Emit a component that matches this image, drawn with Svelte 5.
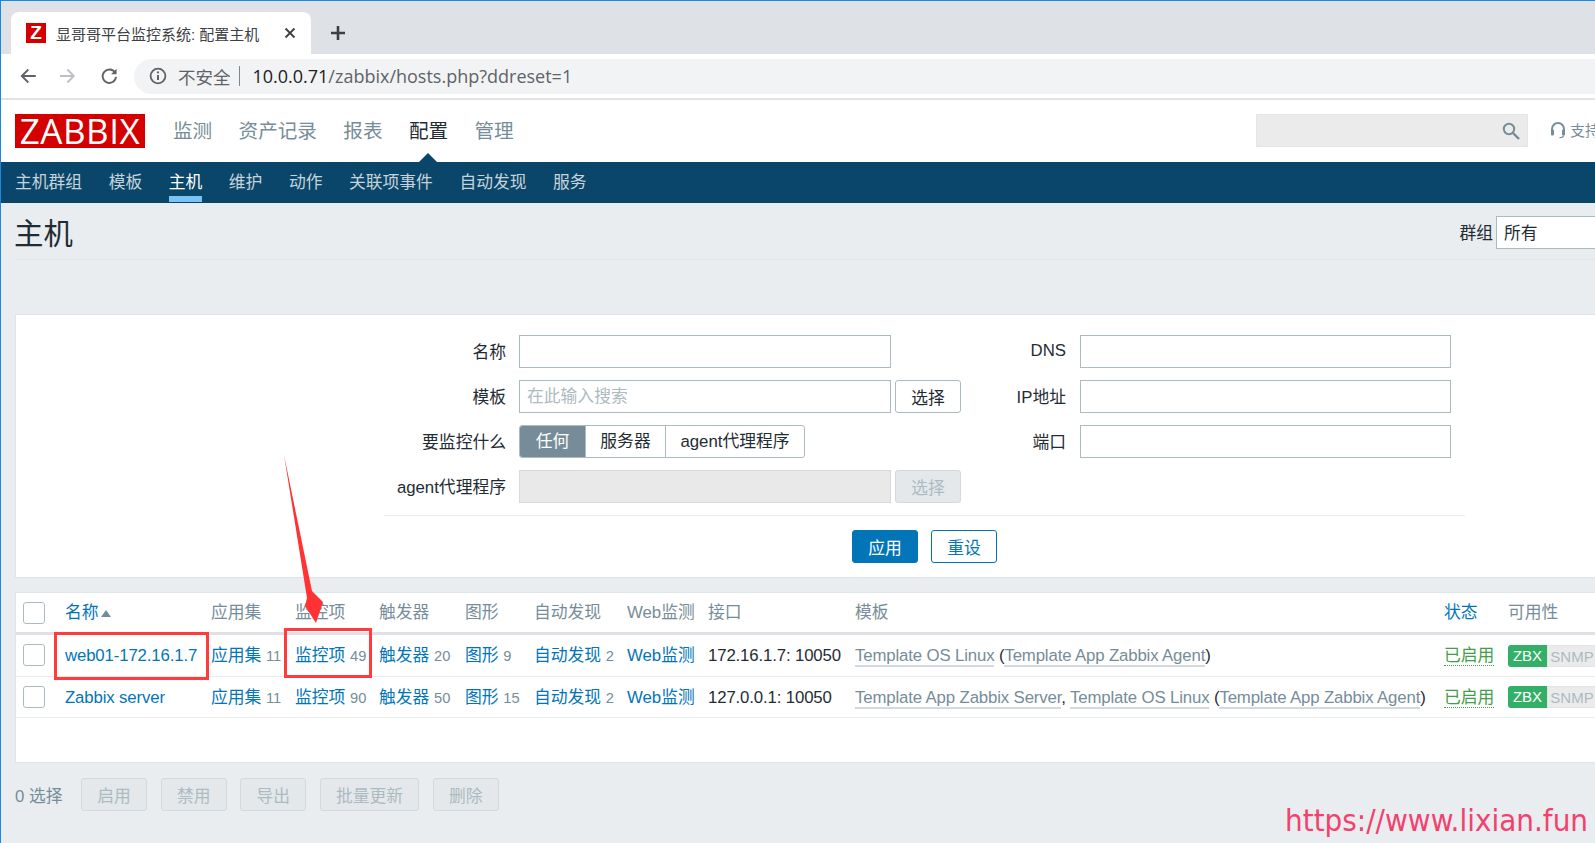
<script lang="ts">
  const mainNav = [
    { label: "监测" },
    { label: "资产记录" },
    { label: "报表" },
    { label: "配置", active: true },
    { label: "管理" },
  ];
  const subNav = [
    { label: "主机群组" },
    { label: "模板" },
    { label: "主机", active: true },
    { label: "维护" },
    { label: "动作" },
    { label: "关联项事件" },
    { label: "自动发现" },
    { label: "服务" },
  ];
  const columns = ["应用集", "监控项", "触发器", "图形", "自动发现", "Web监测", "接口", "模板"];
  const hosts = [
    {
      name: "web01-172.16.1.7",
      apps: 11, items: 49, triggers: 20, graphs: 9, discovery: 2,
      iface: "172.16.1.7: 10050",
      templates: ["Template OS Linux"],
      parent: "Template App Zabbix Agent",
    },
    {
      name: "Zabbix server",
      apps: 11, items: 90, triggers: 50, graphs: 15, discovery: 2,
      iface: "127.0.0.1: 10050",
      templates: ["Template App Zabbix Server", "Template OS Linux"],
      parent: "Template App Zabbix Agent",
    },
  ];
  const bulk = ["启用", "禁用", "导出", "批量更新", "删除"];
</script>

<div class="page">
  <div class="tabbar">
    <div class="tab">
      <span class="favicon">Z</span>
      <span class="tab-title">显哥哥平台监控系统: 配置主机</span>
      <svg class="tab-close" viewBox="0 0 12 12" width="12" height="12">
        <path d="M1.5 1.5l9 9M10.5 1.5l-9 9" stroke="#3c4043" stroke-width="1.8" fill="none" />
      </svg>
    </div>
    <svg class="tab-new" viewBox="0 0 16 16" width="16" height="16">
      <path d="M8 1v14M1 8h14" stroke="#3c4043" stroke-width="2.6" fill="none" />
    </svg>
  </div>

  <div class="toolbar">
    <svg viewBox="0 0 20 20" width="20" height="20" class="tool">
      <path d="M18 10H3.5M10 3l-7 7 7 7" stroke="#5f6368" stroke-width="2" fill="none" />
    </svg>
    <svg viewBox="0 0 20 20" width="20" height="20" class="tool">
      <path d="M2 10h14.5M10 3l7 7-7 7" stroke="#bdc1c6" stroke-width="2" fill="none" />
    </svg>
    <svg viewBox="0 0 20 20" width="20" height="20" class="tool reload">
      <path d="M16.2 6.5A7.2 7.2 0 1 0 17.2 11" stroke="#5f6368" stroke-width="2" fill="none" />
      <path d="M17.8 2.2v6h-6z" fill="#5f6368" />
    </svg>
    <div class="address">
      <svg viewBox="0 0 18 18" width="18" height="18">
        <circle cx="9" cy="9" r="7.4" stroke="#5f6368" stroke-width="1.8" fill="none" />
        <path d="M9 8v5" stroke="#5f6368" stroke-width="2" />
        <circle cx="9" cy="5.4" r="1.1" fill="#5f6368" />
      </svg>
      <span class="insecure">不安全</span>
      <span class="sep"></span>
      <span class="url"><b>10.0.0.71</b>/zabbix/hosts.php?ddreset=1</span>
    </div>
  </div>

  <header class="mainbar">
    <div class="logo">ZABBIX</div>
    <nav class="mainnav">
      {#each mainNav as item}
        <span class:active={item.active}>{item.label}</span>
      {/each}
    </nav>
    <div class="search">
      <svg viewBox="0 0 18 18" width="18" height="18">
        <circle cx="7" cy="7" r="5.2" stroke="#768d99" stroke-width="2" fill="none" />
        <path d="M11 11l6 6" stroke="#768d99" stroke-width="2.4" />
      </svg>
    </div>
    <div class="support">
      <svg viewBox="0 0 16 18" width="16" height="18">
        <path d="M2 11V8a6 6 0 0 1 12 0v3" stroke="#768d99" stroke-width="2" fill="none" />
        <rect x="1" y="8.5" width="3" height="6" rx="1" fill="#768d99" />
        <rect x="12" y="8.5" width="3" height="6" rx="1" fill="#768d99" />
        <path d="M13.5 14.5q0 2-4 2.2" stroke="#768d99" stroke-width="1.2" fill="none" />
      </svg>
      <span>支持</span>
    </div>
  </header>

  <nav class="subnav">
    {#each subNav as item}
      <span class:active={item.active}>{item.label}</span>
    {/each}
  </nav>

  <main class="content">
    <div class="title-row">
      <h1>主机</h1>
      <div class="group">
        <span>群组</span>
        <div class="select">所有</div>
      </div>
    </div>

    <section class="filter">
      <div class="filter-grid">
        <label for="f-name">名称</label>
        <div><input id="f-name" class="wide" /></div>
        <label for="f-dns">DNS</label>
        <input id="f-dns" />

        <label for="f-tpl">模板</label>
        <div class="with-btn">
          <input id="f-tpl" class="wide" placeholder="在此输入搜索" />
          <button class="plain">选择</button>
        </div>
        <label for="f-ip">IP地址</label>
        <input id="f-ip" />

        <span class="label">要监控什么</span>
        <div class="segment">
          <span class="on">任何</span>
          <span>服务器</span>
          <span>agent代理程序</span>
        </div>
        <label for="f-port">端口</label>
        <input id="f-port" />

        <span class="label">agent代理程序</span>
        <div class="with-btn">
          <input class="wide" disabled />
          <button class="off">选择</button>
        </div>
      </div>
      <div class="filter-actions">
        <button class="apply">应用</button>
        <button class="reset">重设</button>
      </div>
    </section>

    <section class="hosts">
      <table>
        <colgroup>
          <col style="width:49px" />
          <col style="width:146px" />
          <col style="width:84px" />
          <col style="width:84px" />
          <col style="width:86px" />
          <col style="width:69px" />
          <col style="width:93px" />
          <col style="width:81px" />
          <col style="width:147px" />
          <col style="width:589px" />
          <col style="width:64px" />
          <col />
        </colgroup>
        <thead>
          <tr>
            <th class="check"><span class="box"></span></th>
            <th><a href="#top">名称</a><span class="sort"></span></th>
            {#each columns as col}
              <th>{col}</th>
            {/each}
            <th><a href="#top">状态</a></th>
            <th>可用性</th>
          </tr>
        </thead>
        <tbody>
          {#each hosts as h}
            <tr>
              <td class="check"><span class="box"></span></td>
              <td class="latin"><a href="#top">{h.name}</a></td>
              <td><a href="#top">应用集</a> <small>{h.apps}</small></td>
              <td><a href="#top">监控项</a> <small>{h.items}</small></td>
              <td><a href="#top">触发器</a> <small>{h.triggers}</small></td>
              <td><a href="#top">图形</a> <small>{h.graphs}</small></td>
              <td><a href="#top">自动发现</a> <small>{h.discovery}</small></td>
              <td><a href="#top">Web监测</a></td>
              <td class="latin">{h.iface}</td>
              <td class="latin tpl">
                {#each h.templates as t, i}<span class="tlink">{t}</span>{i < h.templates.length - 1 ? ", " : " "}{/each}(<span class="tlink">{h.parent}</span>)
              </td>
              <td><span class="enabled">已启用</span></td>
              <td class="avail"><span class="zbx">ZBX</span><span class="snmp">SNMP</span></td>
            </tr>
          {/each}
        </tbody>
      </table>
    </section>

    <div class="footer">
      <span class="count">0 选择</span>
      {#each bulk as b}
        <button class="off">{b}</button>
      {/each}
    </div>
  </main>

  <!-- annotations drawn on top of the screenshot -->
  <div class="mark mark-name"></div>
  <div class="mark mark-items"></div>
  <svg class="arrow" viewBox="0 0 50 180" width="50" height="180">
    <path d="M4 0L32 136 43 147 36 168 25 151 27 143z" fill="#ff3333" />
  </svg>
  <div class="watermark">https://www.lixian.fun</div>
</div>

<style>
  :global(body) {
    background: #e9edf0;
    overflow: hidden;
  }
  .page {
    position: relative;
    box-sizing: border-box;
    width: 1640px;
    height: 843px;
    border-top: 1px solid #1a88e0;
    border-left: 1px solid #1a88e0;
    font-family: "Liberation Sans", "Noto Sans CJK SC", sans-serif;
    font-size: 16.8px;
    color: #1f2c33;
    overflow: hidden;
  }

  /* browser chrome */
  .tabbar {
    display: flex;
    align-items: flex-end;
    height: 53px;
    background: #dee1e6;
    padding-left: 10px;
  }
  .tab {
    display: flex;
    align-items: center;
    box-sizing: border-box;
    width: 300px;
    height: 42px;
    padding: 0 15px;
    background: #fff;
    border-radius: 8px 8px 0 0;
  }
  .favicon {
    width: 20px;
    height: 20px;
    background: #d40000;
    color: #fff;
    font-size: 19px;
    font-weight: 700;
    line-height: 20px;
    text-align: center;
  }
  .tab-title {
    margin-left: 10px;
    font-size: 15px;
    color: #3c4043;
    white-space: nowrap;
  }
  .tab-close {
    margin-left: auto;
    margin-right: 0;
  }
  .tab-new {
    margin: 0 0 13px 19px;
  }
  .toolbar {
    display: flex;
    align-items: center;
    background: #fff;
    border-bottom: 2px solid #e2e3e5;
    box-sizing: border-box;
    height: 46px;
    padding-left: 18px;
  }
  .tool {
    margin-right: 20px;
  }
  .reload {
    margin-left: 4px;
  }
  .address {
    display: flex;
    align-items: center;
    width: 1600px;
    height: 35px;
    margin-left: -5px;
    padding-left: 15px;
    background: #f1f3f4;
    border-radius: 18px 0 0 18px;
  }
  .insecure {
    margin-left: 11px;
    font-size: 17.5px;
    color: #5f6368;
  }
  .sep {
    width: 1px;
    height: 20px;
    margin: 0 12px 0 9px;
    background: #80868b;
  }
  .url {
    font-family: "Open Sans", "Liberation Sans", sans-serif;
    font-size: 18px;
    color: #5f6368;
    white-space: nowrap;
  }
  .url b {
    font-weight: 400;
    color: #202124;
  }

  /* zabbix header */
  .mainbar {
    display: flex;
    align-items: center;
    height: 62px;
    padding-left: 14px;
    background: #fff;
  }
  .logo {
    box-sizing: border-box;
    width: 130px;
    height: 34px;
    background: #d40000;
    color: #fff;
    font-family: "Open Sans", "Liberation Sans", sans-serif;
    font-size: 35px;
    line-height: 33px;
    text-align: center;
    letter-spacing: 0.5px;
  }
  .mainnav {
    display: flex;
    gap: 26.4px;
    margin: -4px 0 0 28px;
    font-size: 19.6px;
    color: #768d99;
  }
  .mainnav .active {
    position: relative;
    color: #1f2c33;
  }
  .mainnav .active::after {
    content: "";
    position: absolute;
    left: 7px;
    bottom: -21px;
    border: 12px solid transparent;
    border-top: 0;
    border-bottom-color: #0a466a;
  }
  .search {
    display: flex;
    align-items: center;
    justify-content: flex-end;
    box-sizing: border-box;
    width: 272px;
    height: 33px;
    margin: -1px 1px 0 auto;
    padding-right: 7px;
    background: #ebebeb;
    border: 1px solid #e3e5e6;
  }
  .support {
    display: flex;
    align-items: center;
    gap: 4px;
    width: 90px;
    margin: -3px 0 0 21px;
    font-size: 15px;
    color: #768d99;
  }
  .subnav {
    display: flex;
    gap: 26.5px;
    height: 41px;
    padding-left: 14px;
    background: #0a466a;
    font-size: 16.8px;
    line-height: 42px;
    color: #c5d3da;
  }
  .subnav .active {
    color: #fff;
    height: 34px;
    border-bottom: 6px solid #7cc3f5;
  }

  /* content */
  .content {
    padding: 0 14px;
  }
  .title-row {
    display: flex;
    align-items: center;
    justify-content: space-between;
    height: 56px;
    border-bottom: 1px solid #dfe4e7;
  }
  h1 {
    margin: 0 0 0 -1px;
    font-size: 29.4px;
    font-weight: 400;
  }
  .group {
    display: flex;
    align-items: center;
    gap: 3px;
    margin-top: 2px;
  }
  .select {
    box-sizing: border-box;
    width: 130px;
    height: 33px;
    padding-left: 7px;
    line-height: 34px;
    background: #fff;
    border: 1px solid #acbbc2;
  }

  .filter {
    box-sizing: border-box;
    height: 264px;
    margin-top: 54px;
    padding-top: 20px;
    background: #fff;
    border: 1px solid #dfe4e7;
  }
  .filter-grid {
    display: grid;
    grid-template-columns: 490px 454px 106px 372px;
    grid-auto-rows: 33px;
    row-gap: 12px;
    align-items: center;
  }
  .filter-grid > label,
  .filter-grid > .label {
    padding-bottom: 2px;
    text-align: right;
  }
  .filter-grid > :nth-child(4n + 2) {
    margin-left: 13px;
  }
  input {
    box-sizing: border-box;
    width: 371px;
    height: 33px;
    margin-left: 14px;
    padding: 0 7px;
    border: 1px solid #acbbc2;
    background: #fff;
    font: inherit;
    outline: none;
  }
  input.wide {
    display: block;
    flex: none;
    width: 372px;
    margin-left: 0;
  }
  input:disabled {
    background: #e9e9e9;
    border-color: #d5dadd;
  }
  input::placeholder {
    color: #acbbc2;
  }
  .with-btn {
    display: flex;
    gap: 4px;
  }
  button {
    flex: none;
    box-sizing: border-box;
    height: 33px;
    padding: 0 15px;
    border-radius: 3px;
    font: inherit;
  }
  .plain {
    width: 66px;
    padding: 0;
    background: #fff;
    border: 1px solid #acbbc2;
    color: #1f2c33;
  }
  .off {
    background: #e5e8ea;
    border: 1px solid #d3d9dc;
    color: #acbbc2;
  }
  .with-btn .off {
    width: 66px;
    padding: 0;
  }
  .segment {
    display: flex;
    width: 286px;
    height: 33px;
    box-sizing: border-box;
    border: 1px solid #acbbc2;
    border-radius: 3px;
    line-height: 31px;
    text-align: center;
    overflow: hidden;
  }
  .segment span {
    flex: none;
    width: 80px;
    border-left: 1px solid #acbbc2;
    box-sizing: border-box;
  }
  .segment span:last-child {
    width: 139px;
  }
  .segment .on {
    width: 65px;
    border-left: 0;
    background: #768d99;
    color: #fff;
  }
  .filter-actions {
    display: flex;
    gap: 13px;
    margin: 12px 0 0 368px;
    padding: 14px 0 0 468px;
    width: 613px;
    border-top: 1px solid #e9edf0;
  }
  .apply,
  .reset {
    width: 66px;
    padding: 0;
  }
  .apply {
    background: #0275b8;
    border: 1px solid #0275b8;
    color: #fff;
  }
  .reset {
    background: #fff;
    border: 1px solid #0275b8;
    color: #0275b8;
  }

  .hosts {
    box-sizing: border-box;
    height: 171px;
    margin-top: 14px;
    background: #fff;
    border: 1px solid #dfe4e7;
  }
  table {
    table-layout: fixed;
    width: 1609px;
    border-collapse: collapse;
  }
  th,
  td {
    padding: 0;
    font-weight: 400;
    line-height: 22px;
    text-align: left;
    white-space: nowrap;
    overflow: hidden;
  }
  th {
    height: 39px;
    color: #768d99;
    border-bottom: 3px solid #dee2e6;
  }
  td {
    height: 40px;
    border-bottom: 1px solid #e9edf0;
  }
  tbody tr:first-child td {
    height: 41px;
  }
  tbody tr:last-child td:not(.check, .avail) {
    height: 38px;
    padding-top: 2px;
  }
  tbody .box {
    margin-top: -1px;
  }
  .latin {
    letter-spacing: -0.14px;
  }
  .check {
    padding-left: 7px;
  }
  .box {
    display: block;
    box-sizing: border-box;
    width: 22px;
    height: 22px;
    background: #fff;
    border: 1px solid #acbbc2;
    border-radius: 3px;
  }
  a {
    color: #0275b8;
    text-decoration: none;
  }
  small {
    font-size: 14.7px;
    color: #768d99;
  }
  .sort {
    display: inline-block;
    margin-left: 2px;
    border: 5px solid transparent;
    border-top: 0;
    border-bottom: 7px solid #768d99;
    vertical-align: 1px;
  }
  .tlink {
    color: #768d99;
    border-bottom: 2px solid #d3dadf;
  }
  .enabled {
    color: #429e47;
    border-bottom: 1px dotted #429e47;
  }
  .avail {
    overflow: visible;
  }
  .zbx,
  .snmp {
    display: inline-block;
    box-sizing: border-box;
    height: 22px;
    font-size: 15px;
    line-height: 22px;
    text-align: center;
    vertical-align: middle;
  }
  .zbx {
    width: 39px;
    background: #34af67;
    color: #fff;
    border-radius: 3px 0 0 3px;
  }
  .snmp {
    width: 50px;
    background: #ebebeb;
    color: #acbbc2;
    line-height: 21px;
    border: 1px solid #dfe4e7;
  }

  .footer {
    display: flex;
    align-items: center;
    height: 33px;
    margin-top: 15px;
    color: #768d99;
  }
  .count {
    width: 66px;
  }
  .footer .off {
    width: 66px;
    padding: 0;
    margin-right: 13.7px;
  }
  .footer .off:nth-child(5) {
    width: 99px;
  }

  /* annotations */
  .mark {
    position: absolute;
    box-sizing: border-box;
    border: 3px solid #ff3b3b;
  }
  .mark-name {
    left: 53px;
    top: 631px;
    width: 155px;
    height: 48px;
  }
  .mark-items {
    left: 283px;
    top: 627px;
    width: 88px;
    height: 50px;
  }
  .arrow {
    position: absolute;
    left: 279px;
    top: 454px;
  }
  .watermark {
    position: absolute;
    right: 52px;
    top: 801px;
    font-family: "DejaVu Sans", sans-serif;
    font-stretch: condensed;
    font-size: 31px;
    color: #f2416f;
  }
</style>
